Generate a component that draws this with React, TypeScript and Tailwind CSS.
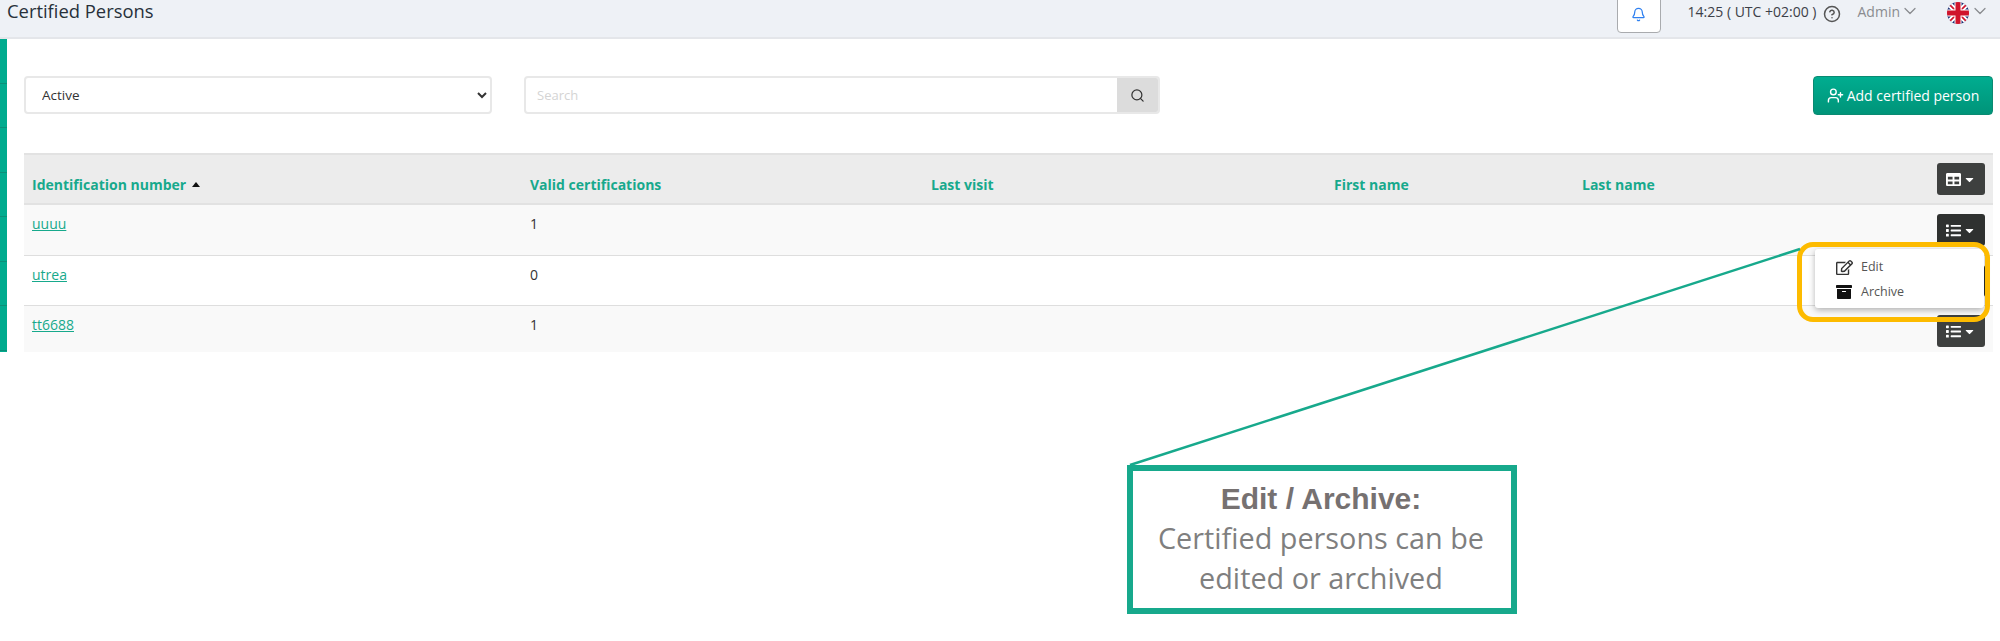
import React from 'react';
import { Bell, ChevronDown, CircleHelp, Search, UserPlus } from 'lucide-react';
import { FaArchive, FaCaretDown, FaList, FaRegEdit, FaTable } from 'react-icons/fa';

const rows = [
  { id: 'uuuu', certs: '1', bg: 'bg-[#f9f9f9]', height: 'h-[51px]', button: 'bg-[#2f3130]' },
  { id: 'utrea', certs: '0', bg: 'bg-white', height: 'h-[50px]', button: 'bg-[#2f3130]' },
  { id: 'tt6688', certs: '1', bg: 'bg-[#f9f9f9]', height: 'h-[46px]', button: 'bg-[#3e403f]' },
];

const columns = 'grid grid-cols-[498px_401px_403px_248px_1fr_56px]';
const headCell = 'flex items-center pl-[8px] pt-[10px] font-bold text-[#17a98c]';

const UkFlag = () => (
  <svg width="22" height="22" viewBox="0 0 22 22">
    <defs>
      <clipPath id="flag-circle">
        <circle cx="11" cy="11" r="11" />
      </clipPath>
    </defs>
    <g clipPath="url(#flag-circle)">
      <rect width="22" height="22" fill="#1b2f73" />
      <path d="M0 2 L20 22 M2 0 L22 20 M22 2 L2 22 M20 0 L0 20" stroke="#fff" strokeWidth="2.5" />
      <path d="M0 0 L22 22 M22 0 L0 22" stroke="#d0142c" strokeWidth="1.6" />
      <rect x="7.5" width="7" height="22" fill="#fff" />
      <rect y="7.5" width="22" height="7" fill="#fff" />
      <rect x="8.5" width="5" height="22" fill="#d0142c" />
      <rect y="8.5" width="22" height="5" fill="#d0142c" />
    </g>
  </svg>
);

const DarkButton = ({ icon, color }: { icon: React.ReactNode; color: string }) => (
  <button className={`flex h-[32px] w-[48px] items-center justify-center gap-[2px] rounded-[3px] text-white ${color}`}>
    {icon}
    <FaCaretDown size={13} />
  </button>
);

export default function App() {
  return (
    <div className="relative h-[641px] w-[2000px] overflow-hidden bg-white font-['Open_Sans',sans-serif]">
      {/* top bar */}
      <header className="flex h-[39px] items-start justify-between border-b-2 border-[#e4e6ea] bg-[#eef1f6]">
        <h1 className="ml-[7px] mt-[1px] text-[18.4px] leading-[20px] text-[#27303a]">Certified Persons</h1>
        <div className="flex items-start text-[14px]">
          <button className="mt-[-4px] flex h-[37px] w-[44px] items-center justify-center rounded-[4px] border border-[#a9abae] bg-white">
            <Bell size={15} className="text-[#2f80f0]" />
          </button>
          <span className="ml-[27px] mt-[2px] leading-[20px] text-[#3c4048]">14:25 ( UTC +02:00 )</span>
          <CircleHelp size={18} className="ml-[6px] mt-[5px] text-[#555]" />
          <span className="ml-[17px] mt-[2px] leading-[20px] text-[#8a8c90]">Admin</span>
          <ChevronDown size={20} strokeWidth={1.5} className="mt-[1px] text-[#8a8c90]" />
          <span className="ml-[27px] mt-[2px]">
            <UkFlag />
          </span>
          <ChevronDown size={20} strokeWidth={1.5} className="ml-[1px] mr-[10px] mt-[1px] text-[#8a8c90]" />
        </div>
      </header>

      <div className="flex">
        {/* collapsed side nav */}
        <nav className="flex h-[313px] w-[7px] flex-col bg-[#00ab8e]">
          {[0, 1, 2, 3, 4, 5, 6].map((i) => (
            <div key={i} className="h-[44.5px] shrink-0 border-b border-[#0b8f78]" />
          ))}
        </nav>

        <main className="w-[1986px] pl-[17px]">
          {/* filters */}
          <div className="flex h-[114px] items-start pt-[37px]">
            <select className="h-[38px] w-[468px] rounded-[4px] border-2 border-[#e8e8e8] bg-white pl-[12px] pr-[2px] text-[13.5px] text-[#333]">
              <option>Active</option>
            </select>
            <div className="ml-[32px] flex h-[38px] w-[636px] overflow-hidden rounded-[4px] border-2 border-[#e8e8e8]">
              <input
                placeholder="Search"
                className="min-w-0 flex-1 pl-[11px] pt-[1px] text-[13px] outline-none placeholder:text-[#d4d4d4]"
              />
              <span className="flex w-[41px] items-center justify-center bg-[#dcdcdc]">
                <Search size={15} className="text-[#333]" />
              </span>
            </div>
            <button className="ml-auto flex h-[39px] w-[180px] items-center justify-center gap-[3px] rounded-[4px] border border-[#0a8a72] bg-gradient-to-b from-[#00ad90] to-[#009479] text-[14px] text-white">
              <UserPlus size={17} />
              Add certified person
            </button>
          </div>

          {/* table */}
          <div className="text-[14px]">
            <div className={`${columns} h-[52px] border-y-2 border-[#e2e2e2] bg-[#ececec]`}>
              <div className={`${headCell} gap-[6px]`}>
                Identification number
                <span className="mt-[1px] h-0 w-0 border-x-[4px] border-b-[5px] border-x-transparent border-b-[#111]" />
              </div>
              <div className={headCell}>Valid certifications</div>
              <div className={headCell}>Last visit</div>
              <div className={headCell}>First name</div>
              <div className={headCell}>Last name</div>
              <div className="flex items-center">
                <DarkButton icon={<FaTable size={15} />} color="bg-[#3e403f]" />
              </div>
            </div>
            {rows.map((row) => (
              <div key={row.id} className={`${columns} ${row.height} border-b border-[#dedede] ${row.bg} last:border-b-0`}>
                <div className="pl-[8px] pt-[9px] leading-[20px]">
                  <a className="text-[#17a98c] underline">{row.id}</a>
                </div>
                <div className="pl-[8px] pt-[9px] leading-[20px] text-[#333]">{row.certs}</div>
                <div />
                <div />
                <div />
                <div className="pt-[9px]">
                  <DarkButton icon={<FaList size={15} />} color={row.button} />
                </div>
              </div>
            ))}
          </div>
        </main>
      </div>

      {/* row action menu */}
      <div className="absolute left-[1815px] top-[249px] h-[59px] w-[169px] rounded-[3px] bg-white text-[12.5px] text-[#555] shadow-[0_2px_6px_rgba(0,0,0,0.3)]">
        <div className="flex h-[27px] items-center pl-[21px] pt-[10px]">
          <FaRegEdit size={17} className="text-[#333]" />
          <span className="ml-[8px]">Edit</span>
        </div>
        <div className="flex h-[24px] items-center pl-[21px] pt-[8px]">
          <FaArchive size={16} className="text-[#111]" />
          <span className="ml-[9px]">Archive</span>
        </div>
      </div>

      {/* annotation highlight and callout */}
      <div className="absolute left-[1797px] top-[242px] h-[80px] w-[193px] rounded-[16px] border-[5px] border-[#fdbb00]" />
      <svg className="absolute left-[1127px] top-[245px]" width="680" height="222">
        <line x1="3" y1="220" x2="673" y2="4" stroke="#17a98c" strokeWidth="2.5" />
      </svg>
      <div className="absolute left-[1127px] top-[465px] flex h-[149px] w-[390px] flex-col items-center justify-center border-[6px] border-[#17a98c] bg-white pb-[1px] pr-[2px] text-center">
        <div className="font-['Liberation_Sans',sans-serif] text-[30px] font-bold leading-[38px] text-[#767171]">Edit / Archive:</div>
        <div className="text-[28.8px] leading-[40px] text-[#7f7f7f]">Certified persons can be</div>
        <div className="text-[28.8px] leading-[40px] text-[#7f7f7f]">edited or archived</div>
      </div>
    </div>
  );
}
